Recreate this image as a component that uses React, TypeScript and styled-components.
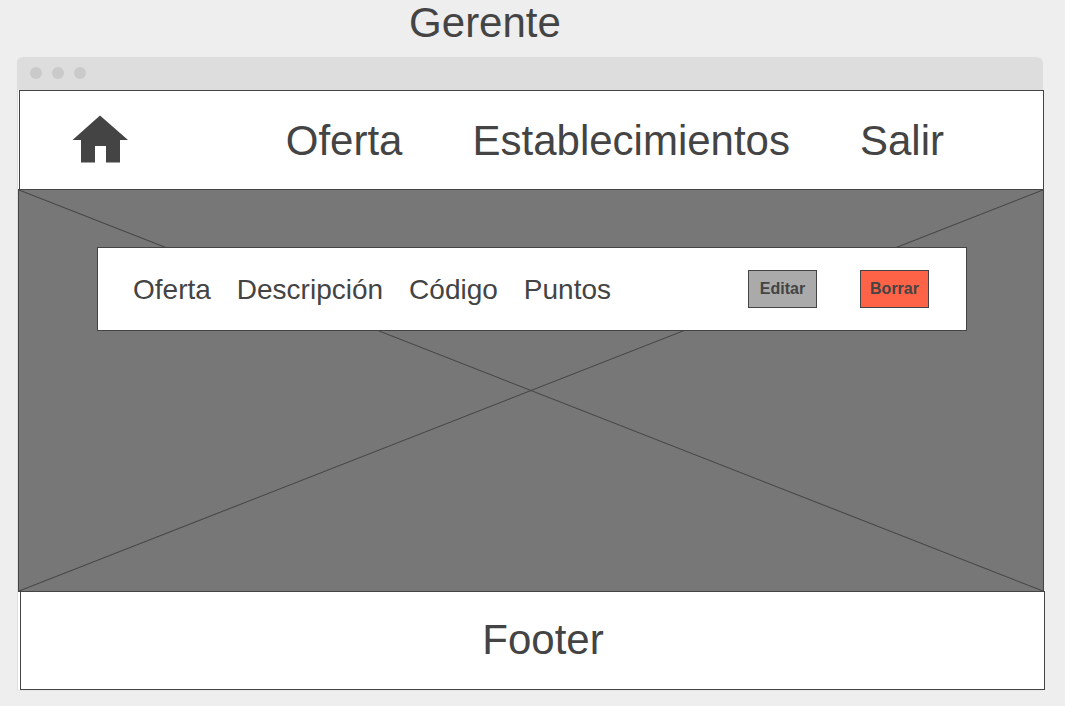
import React from "react";
import styled, { createGlobalStyle } from "styled-components";

const ink = "#444";

const GlobalStyle = createGlobalStyle`
  *, *::before, *::after { box-sizing: border-box; }
  body {
    margin: 0;
    background: #eee;
    color: ${ink};
    font-family: "Liberation Sans", Arial, sans-serif;
  }
`;

const Page = styled.div`
  padding: 0 22px 16px 17px;
`;

const Title = styled.h1`
  margin: 0;
  padding: 0 90px 11px 0;
  font-size: 42px;
  font-weight: 400;
  line-height: 46px;
  text-align: center;
`;

const BrowserWindow = styled.div`
  background: #fff;
  border-left: 1px solid #ddd;
  border-bottom: 1px solid #e6e6e6;
  border-radius: 6px 6px 0 0;
`;

const TitleBar = styled.div`
  display: flex;
  gap: 10px;
  height: 33px;
  margin-left: -1px;
  padding: 10px 13px;
  background: #ddd;
  border-radius: 6px 6px 0 0;
`;

const Dot = styled.span`
  width: 12px;
  height: 12px;
  border-radius: 50%;
  background: #cacaca;
`;

const NavBar = styled.nav`
  display: flex;
  align-items: center;
  justify-content: space-between;
  height: 99px;
  margin: 0 -1px 0 1px;
  padding: 0 99px 0 52px;
  background: #fff;
  border: 1px solid ${ink};
  border-bottom: 0;
`;

const HomeLink = styled.a`
  display: flex;
  padding-bottom: 2px;
  color: ${ink};
`;

const Links = styled.div`
  display: flex;
  gap: 70px;
  padding-top: 2px;
`;

const NavLink = styled.a`
  color: ${ink};
  font-size: 42px;
  line-height: 48px;
  text-decoration: none;
`;

const Hero = styled.main`
  position: relative;
  height: 403px;
  margin-right: -1px;
  padding: 57px 76px 0 78px;
  background: #777;
  border: 1px solid ${ink};
`;

const Cross = styled.svg`
  position: absolute;
  inset: 0;
  width: 100%;
  height: 100%;
`;

const OfferRow = styled.section`
  position: relative;
  display: flex;
  align-items: center;
  justify-content: space-between;
  height: 84px;
  padding: 0 37px 0 35px;
  background: #fff;
  border: 1px solid ${ink};
`;

const Fields = styled.div`
  display: flex;
  gap: 26px;
  padding-top: 2px;
  font-size: 28px;
  line-height: 32px;
`;

const Actions = styled.div`
  display: flex;
  gap: 43px;
`;

const ActionButton = styled.button<{ $fill: string }>`
  width: 69px;
  height: 38px;
  padding: 0;
  background: ${({ $fill }) => $fill};
  border: 1px solid ${ink};
  color: ${ink};
  font: bold 16px/18px "Liberation Sans", Arial, sans-serif;
`;

const Footer = styled.footer`
  display: flex;
  align-items: center;
  justify-content: center;
  height: 99px;
  margin: -1px -2px 0 2px;
  padding: 0 0 2px 21px;
  position: relative;
  background: #fff;
  border: 1px solid ${ink};
  font-size: 42px;
  line-height: 48px;
`;

export default function App() {
  return (
    <>
      <GlobalStyle />
      <Page>
        <Title>Gerente</Title>
        <BrowserWindow>
          <TitleBar>
            <Dot />
            <Dot />
            <Dot />
          </TitleBar>
          <NavBar>
            <HomeLink href="#" aria-label="Inicio">
              <svg width="56" height="48" viewBox="0 0 56 48" fill="currentColor" aria-hidden="true">
                <path d="M28 .5 56 25H48V47.5H34V31H23V47.5H9V25H.5Z" />
              </svg>
            </HomeLink>
            <Links>
              <NavLink href="#oferta">Oferta</NavLink>
              <NavLink href="#establecimientos">Establecimientos</NavLink>
              <NavLink href="#salir">Salir</NavLink>
            </Links>
          </NavBar>
          <Hero>
            <Cross viewBox="0 0 100 100" preserveAspectRatio="none" aria-hidden="true">
              <path d="M0 0 100 100M100 0 0 100" fill="none" stroke={ink} vectorEffect="non-scaling-stroke" />
            </Cross>
            <OfferRow>
              <Fields>
                <span>Oferta</span>
                <span>Descripción</span>
                <span>Código</span>
                <span>Puntos</span>
              </Fields>
              <Actions>
                <ActionButton type="button" $fill="#aaa">Editar</ActionButton>
                <ActionButton type="button" $fill="#ff6347">Borrar</ActionButton>
              </Actions>
            </OfferRow>
          </Hero>
          <Footer>Footer</Footer>
        </BrowserWindow>
      </Page>
    </>
  );
}
